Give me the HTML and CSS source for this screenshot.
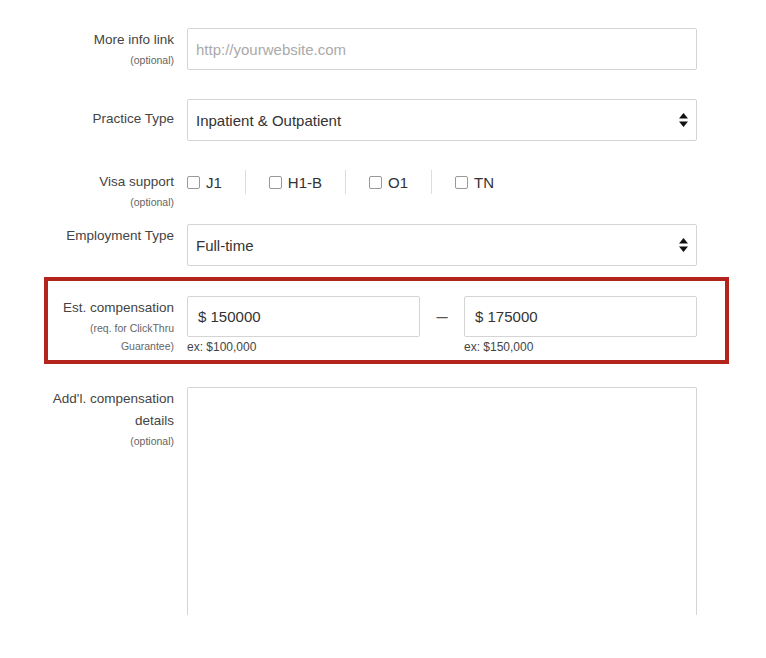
FILE: index.html
```html
<!DOCTYPE html>
<html lang="en">
<head>
    <meta charset="UTF-8">
    <meta name="viewport" content="width=device-width, initial-scale=1.0">
    <title>Job Details</title>
    <link rel="stylesheet" href="styles.css">
</head>
<body>

<form class="job-form">

    <!-- More info link -->
    <div class="row row-link">
        <label class="label">More info link<span class="hint">(optional)</span></label>
        <div class="field">
            <input type="text" class="text-input" placeholder="http://yourwebsite.com">
        </div>
    </div>

    <!-- Practice type -->
    <div class="row row-practice">
        <label class="label label-mid">Practice Type</label>
        <div class="field select-wrap">
            <select class="text-input">
                <option>Inpatient &amp; Outpatient</option>
            </select>
            <svg class="arrows" width="9" height="14" viewBox="0 0 9 14"><path d="M4.5 0 L9 5.5 L0 5.5 Z M4.5 14 L9 8.5 L0 8.5 Z" fill="#111"/></svg>
        </div>
    </div>

    <!-- Visa support -->
    <div class="row row-visa">
        <label class="label label-visa">Visa support<span class="hint">(optional)</span></label>
        <div class="field checks">
            <label class="check"><input type="checkbox"> J1</label>
            <label class="check"><input type="checkbox"> H1-B</label>
            <label class="check"><input type="checkbox"> O1</label>
            <label class="check"><input type="checkbox"> TN</label>
        </div>
    </div>

    <!-- Employment type -->
    <div class="row row-employment">
        <label class="label">Employment Type</label>
        <div class="field select-wrap">
            <select class="text-input">
                <option>Full-time</option>
            </select>
            <svg class="arrows" width="9" height="14" viewBox="0 0 9 14"><path d="M4.5 0 L9 5.5 L0 5.5 Z M4.5 14 L9 8.5 L0 8.5 Z" fill="#111"/></svg>
        </div>
    </div>

    <!-- Compensation (highlighted) -->
    <div class="row highlight">
        <label class="label">Est. compensation<span class="hint">(req. for ClickThru</span><span class="hint">Guarantee)</span></label>
        <div class="field range">
            <div class="range-col">
                <input type="text" class="text-input comp-input" value="$ 150000">
                <div class="example">ex: $100,000</div>
            </div>
            <div class="dash">&ndash;</div>
            <div class="range-col">
                <input type="text" class="text-input comp-input" value="$ 175000">
                <div class="example">ex: $150,000</div>
            </div>
        </div>
    </div>

    <!-- Additional details -->
    <div class="row row-details">
        <label class="label">Add'l. compensation<br>details<span class="hint">(optional)</span></label>
        <div class="field">
            <textarea class="text-input details-box"></textarea>
        </div>
    </div>

</form>

</body>
</html>
```

FILE: styles.css
```css
body {
    margin: 0;
    background: #fff;
    font-family: "Liberation Sans", Arial, sans-serif;
    color: #333;
}
.job-form {
    width: 685px;
    margin-left: 44px;
    padding-top: 28px;
}
.row {
    display: grid;
    grid-template-columns: 130px 510px;
    column-gap: 13px;
    align-items: start;
}
.label {
    display: block;
    text-align: right;
    font-size: 13.5px;
    line-height: 22px;
    padding-top: 1px;
    color: #444;
}
.label-mid {
    padding-top: 9px;
}
.label-visa {
    padding-top: 1px;
}
.hint {
    display: block;
    font-size: 10.5px;
    line-height: 18px;
    color: #666;
}
.text-input {
    display: block;
    width: 100%;
    height: 42px;
    box-sizing: border-box;
    margin: 0;
    padding: 0 8px;
    font-family: inherit;
    font-size: 15px;
    color: #333;
    background: #fff;
    border: 1px solid #d4d4d4;
    border-radius: 2px;
    outline: none;
}
.text-input::placeholder {
    color: #aaa;
}
select.text-input {
    appearance: none;
    -webkit-appearance: none;
}
.select-wrap {
    position: relative;
}
.arrows {
    position: absolute;
    right: 9px;
    top: 14px;
    pointer-events: none;
}
.row-practice {
    margin-top: 29px;
}
.row-visa {
    margin-top: 29px;
}
.checks {
    display: flex;
    align-items: center;
}
.check {
    display: flex;
    align-items: center;
    gap: 6px;
    height: 24px;
    padding: 0 23px;
    font-size: 15px;
    border-left: 1px solid #ddd;
}
.check:first-child {
    padding-left: 0;
    border-left: none;
}
.check input {
    appearance: none;
    -webkit-appearance: none;
    width: 13px;
    height: 13px;
    margin: 0;
    border: 1px solid #999;
    border-radius: 2px;
    background: #fff;
}
.row-employment {
    margin-top: 13px;
}
.highlight {
    margin-top: 11px;
    border: 4px solid #b3241c;
    grid-template-columns: 126px 510px;
    padding: 15px 0 5px;
}
.range {
    display: flex;
}
.range-col {
    width: 233px;
}
.comp-input {
    height: 41px;
    padding-left: 10px;
}
.dash {
    width: 44px;
    text-align: center;
    font-size: 20px;
    line-height: 40px;
    color: #555;
}
.example {
    margin-top: 2px;
    font-size: 12px;
    line-height: 16px;
    color: #444;
}
.row-details {
    margin-top: 23px;
}
.details-box {
    height: 228px;
    resize: none;
    border-bottom: none;
    border-radius: 2px 2px 0 0;
}
```
